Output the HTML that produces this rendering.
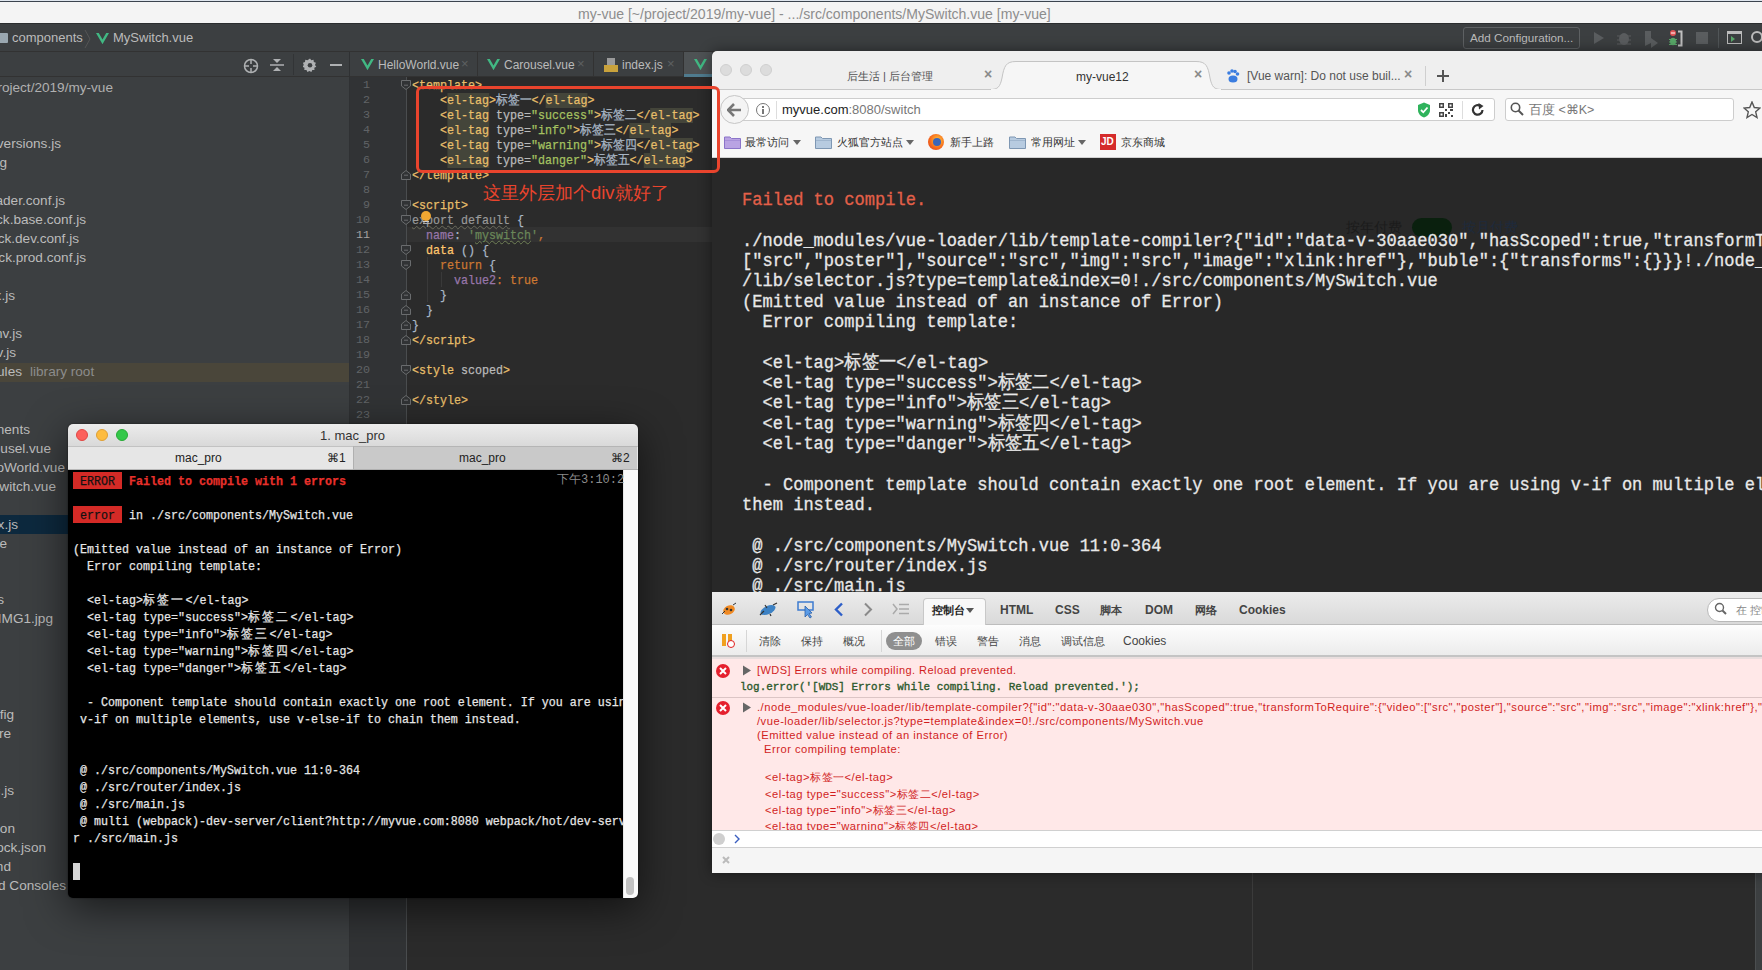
<!DOCTYPE html>
<html><head><meta charset="utf-8">
<style>
*{box-sizing:border-box}
html,body{margin:0;padding:0}
body{width:1762px;height:970px;overflow:hidden;position:relative;background:#2b2b2b;font-family:"Liberation Sans",sans-serif}
.a{position:absolute}
.m{font-family:"Liberation Mono",monospace}
.nw{white-space:pre}
</style></head><body>
<div class="a" style="left:0;top:0;width:1762px;height:24px;background:#f4f4f4"></div>
<div class="a" style="left:0;top:0;width:1762px;height:1px;background:#dfe6ee"></div>
<div class="a" style="left:0;top:1px;width:1762px;height:1px;background:#3b444e"></div>
<div class="a" style="left:0;top:23px;width:1762px;height:1px;background:#2b2d2f"></div>
<div class="a nw" style="left:578px;top:6px;font-size:14.05px;color:#8d8d8d;line-height:16px">my-vue [~/project/2019/my-vue] - .../src/components/MySwitch.vue [my-vue]</div>
<div class="a" style="left:0;top:24px;width:1762px;height:28px;background:#3c3f41"></div>
<div class="a" style="left:0;top:51px;width:1762px;height:1px;background:#323232"></div>
<div class="a" style="left:-2px;top:33px;width:10px;height:10px;background:#9aa7b0;border-radius:1px"></div>
<div class="a nw" style="left:12px;top:30px;font-size:13px;color:#bbbbbb;line-height:16px">components</div>
<svg class="a" style="left:84px;top:29px" width="8" height="20"><path d="M1 1 L6 10 L1 19" stroke="#555" stroke-width="1" fill="none"/></svg>
<svg class="a" style="left:96px;top:33px" width="13" height="11.2" viewBox="0 0 14 12"><path d="M0 0 L3 0 L7 7 L11 0 L14 0 L7 12 Z" fill="#41b883"/></svg>
<div class="a nw" style="left:113px;top:30px;font-size:13px;color:#bbbbbb;line-height:16px">MySwitch.vue</div>
<div class="a" style="left:1463px;top:27px;width:117px;height:22px;border:1px solid #5e6163;border-radius:3px;background:#3c3f41"></div>
<div class="a nw" style="left:1470px;top:31px;font-size:11.7px;color:#bbbbbb;line-height:14px">Add Configuration...</div>
<svg class="a" style="left:1592px;top:30px" width="14" height="16"><path d="M2 2 L12 8 L2 14 Z" fill="#5a5d5f"/></svg>
<svg class="a" style="left:1616px;top:30px" width="16" height="16"><ellipse cx="8" cy="9" rx="5" ry="6" fill="#5a5d5f"/><path d="M1 6h14M1 10h14M1 14h14" stroke="#5a5d5f"/></svg>
<svg class="a" style="left:1642px;top:30px" width="18" height="18"><path d="M3 1h6v12l-6 3z" fill="#5a5d5f"/><path d="M9 8l7 5-7 5z" fill="#5a5d5f"/></svg>
<svg class="a" style="left:1668px;top:29px" width="16" height="19"><circle cx="5" cy="4" r="3" fill="#e05555"/><path d="M3 4h4" stroke="#fff" stroke-width="1"/><ellipse cx="5" cy="12.5" rx="3" ry="3.8" fill="#59a869"/><path d="M1 10.5h8M1 13h8M1 15.5h8" stroke="#59a869" stroke-width="1"/><path d="M10 2.5h3.5v14h-3.5" stroke="#c0c0c0" stroke-width="2" fill="none"/></svg>
<div class="a" style="left:1696px;top:32px;width:12px;height:12px;background:#5a5d5f"></div>
<div class="a" style="left:1718px;top:28px;width:1px;height:20px;background:#515658"></div>
<svg class="a" style="left:1727px;top:31px" width="16" height="14"><rect x="0.5" y="0.5" width="14" height="12" stroke="#bbb" fill="none"/><rect x="0.5" y="0.5" width="14" height="2.5" fill="#bbb"/><path d="M4 5l4 3-4 3z" fill="#59a869"/></svg>
<svg class="a" style="left:1750px;top:30px" width="14" height="16"><circle cx="7" cy="7" r="5" stroke="#bbb" stroke-width="2" fill="none"/></svg>
<div class="a" style="left:0;top:52px;width:350px;height:918px;background:#3c3f41"></div>
<div class="a" style="left:0;top:76px;width:350px;height:1px;background:#323232"></div>
<div class="a" style="left:349px;top:52px;width:1px;height:918px;background:#2f3133"></div>
<svg class="a" style="left:243px;top:58px" width="16" height="16"><circle cx="8" cy="8" r="6.5" stroke="#afb1b3" stroke-width="1.5" fill="none"/><path d="M8 1v5M8 10v5M1 8h5M10 8h5" stroke="#afb1b3" stroke-width="1.5"/></svg>
<svg class="a" style="left:270px;top:58px" width="14" height="14"><path d="M3 1h8l-4 4z M3 13h8l-4-4z" fill="#afb1b3"/><path d="M0 7h14" stroke="#afb1b3" stroke-width="1.5"/></svg>
<div class="a" style="left:293px;top:54px;width:1px;height:21px;background:#323436"></div>
<svg class="a" style="left:303px;top:58px" width="14" height="14" viewBox="0 0 14 14"><path d="M7 0.5l1.3 1.8 2.2-.6.3 2.2 2.1.9-.9 2.1 1.3 1.8-2 1 .2 2.2-2.2 0-.9 2.1-2-1.1-2 1.1-.9-2.1-2.2 0 .2-2.2-2-1 1.3-1.8-.9-2.1 2.1-.9.3-2.2 2.2.6z" fill="#afb1b3"/><circle cx="7" cy="7.2" r="2.3" fill="#3c3f41"/></svg>
<div class="a" style="left:330px;top:64px;width:12px;height:2px;background:#afb1b3"></div>
<div class="a" style="left:0;top:363px;width:349px;height:19px;background:#4a463a"></div>
<div class="a" style="left:0;top:515px;width:349px;height:19px;background:#0d293e"></div>
<div class="a nw" style="right:1649px;top:79px;font-size:13.6px;color:#b0b0b0;line-height:18px">~/project/2019/my-vue</div>
<div class="a nw" style="right:1701px;top:135px;font-size:13.6px;color:#bbbbbb;line-height:18px">check-versions.js</div>
<div class="a nw" style="right:1755px;top:154px;font-size:13.6px;color:#bbbbbb;line-height:18px">config</div>
<div class="a nw" style="right:1697px;top:192px;font-size:13.6px;color:#bbbbbb;line-height:18px">vue-loader.conf.js</div>
<div class="a nw" style="right:1676px;top:211px;font-size:13.6px;color:#bbbbbb;line-height:18px">webpack.base.conf.js</div>
<div class="a nw" style="right:1683px;top:230px;font-size:13.6px;color:#bbbbbb;line-height:18px">webpack.dev.conf.js</div>
<div class="a nw" style="right:1676px;top:249px;font-size:13.6px;color:#bbbbbb;line-height:18px">webpack.prod.conf.js</div>
<div class="a nw" style="right:1747px;top:287px;font-size:13.6px;color:#bbbbbb;line-height:18px">index.js</div>
<div class="a nw" style="right:1740px;top:325px;font-size:13.6px;color:#bbbbbb;line-height:18px">dev.env.js</div>
<div class="a nw" style="right:1746px;top:344px;font-size:13.6px;color:#bbbbbb;line-height:18px">prod.env.js</div>
<div class="a nw" style="right:1732px;top:421px;font-size:13.6px;color:#bbbbbb;line-height:18px">components</div>
<div class="a nw" style="right:1711px;top:440px;font-size:13.6px;color:#bbbbbb;line-height:18px">Carousel.vue</div>
<div class="a nw" style="right:1697px;top:459px;font-size:13.6px;color:#bbbbbb;line-height:18px">HelloWorld.vue</div>
<div class="a nw" style="right:1706px;top:478px;font-size:13.6px;color:#bbbbbb;line-height:18px">MySwitch.vue</div>
<div class="a nw" style="right:1744px;top:516px;font-size:13.6px;color:#bbbbbb;line-height:18px">index.js</div>
<div class="a nw" style="right:1755px;top:535px;font-size:13.6px;color:#bbbbbb;line-height:18px">store</div>
<div class="a nw" style="right:1758px;top:591px;font-size:13.6px;color:#bbbbbb;line-height:18px">as</div>
<div class="a nw" style="right:1709px;top:610px;font-size:13.6px;color:#bbbbbb;line-height:18px">IMG1.jpg</div>
<div class="a nw" style="right:1748px;top:706px;font-size:13.6px;color:#bbbbbb;line-height:18px">.editorconfig</div>
<div class="a nw" style="right:1751px;top:725px;font-size:13.6px;color:#bbbbbb;line-height:18px">.gitignore</div>
<div class="a nw" style="right:1748px;top:782px;font-size:13.6px;color:#bbbbbb;line-height:18px">.postcssrc.js</div>
<div class="a nw" style="right:1747px;top:820px;font-size:13.6px;color:#bbbbbb;line-height:18px">index.json</div>
<div class="a nw" style="right:1716px;top:839px;font-size:13.6px;color:#bbbbbb;line-height:18px">package-lock.json</div>
<div class="a nw" style="right:1751px;top:858px;font-size:13.6px;color:#bbbbbb;line-height:18px">README.md</div>
<div class="a nw" style="right:1696px;top:877px;font-size:13.6px;color:#bbbbbb;line-height:18px">Scratches and Consoles</div>
<div class="a nw" style="right:1740px;top:363px;font-size:13.6px;color:#bbbbbb;line-height:18px">node_modules</div>
<div class="a nw" style="left:30px;top:363px;font-size:13.6px;color:#8c8c8c;line-height:18px">library root</div>
<div class="a" style="left:350px;top:52px;width:1412px;height:25px;background:#3c3f41"></div>
<div class="a" style="left:350px;top:76px;width:1412px;height:1px;background:#323232"></div>
<div class="a" style="left:477px;top:52px;width:1px;height:24px;background:#323232"></div>
<svg class="a" style="left:361px;top:59px" width="13" height="11.2" viewBox="0 0 14 12"><path d="M0 0 L3 0 L7 7 L11 0 L14 0 L7 12 Z" fill="#41b883"/></svg>
<div class="a nw" style="left:378px;top:58px;font-size:12px;color:#bbbbbb;line-height:14px">HelloWorld.vue</div>
<div class="a nw" style="left:461px;top:56px;font-size:13px;color:#5e6163;line-height:15px">&#215;</div>
<div class="a" style="left:593px;top:52px;width:1px;height:24px;background:#323232"></div>
<svg class="a" style="left:487px;top:59px" width="13" height="11.2" viewBox="0 0 14 12"><path d="M0 0 L3 0 L7 7 L11 0 L14 0 L7 12 Z" fill="#41b883"/></svg>
<div class="a nw" style="left:504px;top:58px;font-size:12px;color:#bbbbbb;line-height:14px">Carousel.vue</div>
<div class="a nw" style="left:577px;top:56px;font-size:13px;color:#5e6163;line-height:15px">&#215;</div>
<div class="a" style="left:683px;top:52px;width:1px;height:24px;background:#323232"></div>
<div class="a" style="left:604px;top:58px;width:14px;height:14px"><div class="a" style="left:3px;top:0;width:8px;height:8px;background:#9a9a9a"></div><div class="a" style="left:0;top:7px;width:14px;height:7px;background:#c9a23c"></div></div>
<div class="a nw" style="left:622px;top:58px;font-size:12px;color:#bbbbbb;line-height:14px">index.js</div>
<div class="a nw" style="left:667px;top:56px;font-size:13px;color:#5e6163;line-height:15px">&#215;</div>
<div class="a" style="left:684px;top:52px;width:28px;height:24px;background:#4e5254"></div>
<div class="a" style="left:684px;top:74px;width:28px;height:3px;background:#4f7b8e"></div>
<svg class="a" style="left:694px;top:59px" width="13" height="11.2" viewBox="0 0 14 12"><path d="M0 0 L3 0 L7 7 L11 0 L14 0 L7 12 Z" fill="#41b883"/></svg>
<div class="a" style="left:350px;top:77px;width:57px;height:893px;background:#313335"></div>
<div class="a" style="left:407px;top:227px;width:305px;height:15px;background:#323232"></div>
<div class="a m" style="right:1392px;top:78px;font-size:11.7px;color:#606366;line-height:15px;text-align:right">1</div>
<div class="a m" style="right:1392px;top:93px;font-size:11.7px;color:#606366;line-height:15px;text-align:right">2</div>
<div class="a m" style="right:1392px;top:108px;font-size:11.7px;color:#606366;line-height:15px;text-align:right">3</div>
<div class="a m" style="right:1392px;top:123px;font-size:11.7px;color:#606366;line-height:15px;text-align:right">4</div>
<div class="a m" style="right:1392px;top:138px;font-size:11.7px;color:#606366;line-height:15px;text-align:right">5</div>
<div class="a m" style="right:1392px;top:153px;font-size:11.7px;color:#606366;line-height:15px;text-align:right">6</div>
<div class="a m" style="right:1392px;top:168px;font-size:11.7px;color:#606366;line-height:15px;text-align:right">7</div>
<div class="a m" style="right:1392px;top:183px;font-size:11.7px;color:#606366;line-height:15px;text-align:right">8</div>
<div class="a m" style="right:1392px;top:198px;font-size:11.7px;color:#606366;line-height:15px;text-align:right">9</div>
<div class="a m" style="right:1392px;top:213px;font-size:11.7px;color:#606366;line-height:15px;text-align:right">10</div>
<div class="a m" style="right:1392px;top:228px;font-size:11.7px;color:#a4a3a3;line-height:15px;text-align:right">11</div>
<div class="a m" style="right:1392px;top:243px;font-size:11.7px;color:#606366;line-height:15px;text-align:right">12</div>
<div class="a m" style="right:1392px;top:258px;font-size:11.7px;color:#606366;line-height:15px;text-align:right">13</div>
<div class="a m" style="right:1392px;top:273px;font-size:11.7px;color:#606366;line-height:15px;text-align:right">14</div>
<div class="a m" style="right:1392px;top:288px;font-size:11.7px;color:#606366;line-height:15px;text-align:right">15</div>
<div class="a m" style="right:1392px;top:303px;font-size:11.7px;color:#606366;line-height:15px;text-align:right">16</div>
<div class="a m" style="right:1392px;top:318px;font-size:11.7px;color:#606366;line-height:15px;text-align:right">17</div>
<div class="a m" style="right:1392px;top:333px;font-size:11.7px;color:#606366;line-height:15px;text-align:right">18</div>
<div class="a m" style="right:1392px;top:348px;font-size:11.7px;color:#606366;line-height:15px;text-align:right">19</div>
<div class="a m" style="right:1392px;top:363px;font-size:11.7px;color:#606366;line-height:15px;text-align:right">20</div>
<div class="a m" style="right:1392px;top:378px;font-size:11.7px;color:#606366;line-height:15px;text-align:right">21</div>
<div class="a m" style="right:1392px;top:393px;font-size:11.7px;color:#606366;line-height:15px;text-align:right">22</div>
<div class="a m" style="right:1392px;top:408px;font-size:11.7px;color:#606366;line-height:15px;text-align:right">23</div>
<div class="a" style="left:406px;top:77px;width:1px;height:893px;background:#4a4d4f"></div>
<svg class="a" style="left:401px;top:80px" width="10" height="10"><path d="M0.5 0.5 H9.5 V6 L5 9.5 L0.5 6 Z" fill="#313335" stroke="#6a6c6e"/><path d="M3 5.2 H7" stroke="#6a6c6e"/></svg>
<svg class="a" style="left:401px;top:170px" width="10" height="10"><path d="M0.5 9.5 H9.5 V4 L5 0.5 L0.5 4 Z" fill="#313335" stroke="#6a6c6e"/><path d="M3 5.2 H7" stroke="#6a6c6e"/></svg>
<svg class="a" style="left:401px;top:200px" width="10" height="10"><path d="M0.5 0.5 H9.5 V6 L5 9.5 L0.5 6 Z" fill="#313335" stroke="#6a6c6e"/><path d="M3 5.2 H7" stroke="#6a6c6e"/></svg>
<svg class="a" style="left:401px;top:215px" width="10" height="10"><path d="M0.5 0.5 H9.5 V6 L5 9.5 L0.5 6 Z" fill="#313335" stroke="#6a6c6e"/><path d="M3 5.2 H7" stroke="#6a6c6e"/></svg>
<svg class="a" style="left:401px;top:245px" width="10" height="10"><path d="M0.5 0.5 H9.5 V6 L5 9.5 L0.5 6 Z" fill="#313335" stroke="#6a6c6e"/><path d="M3 5.2 H7" stroke="#6a6c6e"/></svg>
<svg class="a" style="left:401px;top:260px" width="10" height="10"><path d="M0.5 0.5 H9.5 V6 L5 9.5 L0.5 6 Z" fill="#313335" stroke="#6a6c6e"/><path d="M3 5.2 H7" stroke="#6a6c6e"/></svg>
<svg class="a" style="left:401px;top:290px" width="10" height="10"><path d="M0.5 9.5 H9.5 V4 L5 0.5 L0.5 4 Z" fill="#313335" stroke="#6a6c6e"/><path d="M3 5.2 H7" stroke="#6a6c6e"/></svg>
<svg class="a" style="left:401px;top:305px" width="10" height="10"><path d="M0.5 9.5 H9.5 V4 L5 0.5 L0.5 4 Z" fill="#313335" stroke="#6a6c6e"/><path d="M3 5.2 H7" stroke="#6a6c6e"/></svg>
<svg class="a" style="left:401px;top:320px" width="10" height="10"><path d="M0.5 9.5 H9.5 V4 L5 0.5 L0.5 4 Z" fill="#313335" stroke="#6a6c6e"/><path d="M3 5.2 H7" stroke="#6a6c6e"/></svg>
<svg class="a" style="left:401px;top:335px" width="10" height="10"><path d="M0.5 9.5 H9.5 V4 L5 0.5 L0.5 4 Z" fill="#313335" stroke="#6a6c6e"/><path d="M3 5.2 H7" stroke="#6a6c6e"/></svg>
<svg class="a" style="left:401px;top:365px" width="10" height="10"><path d="M0.5 0.5 H9.5 V6 L5 9.5 L0.5 6 Z" fill="#313335" stroke="#6a6c6e"/><path d="M3 5.2 H7" stroke="#6a6c6e"/></svg>
<svg class="a" style="left:401px;top:395px" width="10" height="10"><path d="M0.5 9.5 H9.5 V4 L5 0.5 L0.5 4 Z" fill="#313335" stroke="#6a6c6e"/><path d="M3 5.2 H7" stroke="#6a6c6e"/></svg>
<div class="a m nw" style="left:412px;top:78px;font-size:12.84px;color:#a9b7c6;line-height:15px;-webkit-text-stroke:0.25px;transform:scaleX(0.909);transform-origin:0 50%"><span style="color:#e8bf6a;">&lt;template&gt;</span></div>
<div class="a m nw" style="left:412px;top:93px;font-size:12.84px;color:#a9b7c6;line-height:15px;-webkit-text-stroke:0.25px;transform:scaleX(0.909);transform-origin:0 50%">    <span style="color:#e8bf6a;">&lt;</span><span style="color:#e8bf6a;background:#44453a">el-tag</span><span style="color:#e8bf6a;">&gt;</span><span style="color:#a9b7c6;">标签一</span><span style="color:#e8bf6a;">&lt;/</span><span style="color:#e8bf6a;background:#44453a">el-tag</span><span style="color:#e8bf6a;">&gt;</span></div>
<div class="a m nw" style="left:412px;top:108px;font-size:12.84px;color:#a9b7c6;line-height:15px;-webkit-text-stroke:0.25px;transform:scaleX(0.909);transform-origin:0 50%">    <span style="color:#e8bf6a;">&lt;</span><span style="color:#e8bf6a;background:#44453a">el-tag</span> <span style="color:#bababa;">type=</span><span style="color:#a5c261;">&quot;success&quot;</span><span style="color:#e8bf6a;">&gt;</span><span style="color:#a9b7c6;">标签二</span><span style="color:#e8bf6a;">&lt;/</span><span style="color:#e8bf6a;background:#44453a">el-tag</span><span style="color:#e8bf6a;">&gt;</span></div>
<div class="a m nw" style="left:412px;top:123px;font-size:12.84px;color:#a9b7c6;line-height:15px;-webkit-text-stroke:0.25px;transform:scaleX(0.909);transform-origin:0 50%">    <span style="color:#e8bf6a;">&lt;</span><span style="color:#e8bf6a;background:#44453a">el-tag</span> <span style="color:#bababa;">type=</span><span style="color:#a5c261;">&quot;info&quot;</span><span style="color:#e8bf6a;">&gt;</span><span style="color:#a9b7c6;">标签三</span><span style="color:#e8bf6a;">&lt;/</span><span style="color:#e8bf6a;background:#44453a">el-tag</span><span style="color:#e8bf6a;">&gt;</span></div>
<div class="a m nw" style="left:412px;top:138px;font-size:12.84px;color:#a9b7c6;line-height:15px;-webkit-text-stroke:0.25px;transform:scaleX(0.909);transform-origin:0 50%">    <span style="color:#e8bf6a;">&lt;</span><span style="color:#e8bf6a;background:#44453a">el-tag</span> <span style="color:#bababa;">type=</span><span style="color:#a5c261;">&quot;warning&quot;</span><span style="color:#e8bf6a;">&gt;</span><span style="color:#a9b7c6;">标签四</span><span style="color:#e8bf6a;">&lt;/</span><span style="color:#e8bf6a;background:#44453a">el-tag</span><span style="color:#e8bf6a;">&gt;</span></div>
<div class="a m nw" style="left:412px;top:153px;font-size:12.84px;color:#a9b7c6;line-height:15px;-webkit-text-stroke:0.25px;transform:scaleX(0.909);transform-origin:0 50%">    <span style="color:#e8bf6a;">&lt;</span><span style="color:#e8bf6a;background:#44453a">el-tag</span> <span style="color:#bababa;">type=</span><span style="color:#a5c261;">&quot;danger&quot;</span><span style="color:#e8bf6a;">&gt;</span><span style="color:#a9b7c6;">标签五</span><span style="color:#e8bf6a;">&lt;/</span><span style="color:#e8bf6a;background:#44453a">el-tag</span><span style="color:#e8bf6a;">&gt;</span></div>
<div class="a m nw" style="left:412px;top:168px;font-size:12.84px;color:#a9b7c6;line-height:15px;-webkit-text-stroke:0.25px;transform:scaleX(0.909);transform-origin:0 50%"><span style="color:#e8bf6a;">&lt;/template&gt;</span></div>
<div class="a m nw" style="left:412px;top:198px;font-size:12.84px;color:#a9b7c6;line-height:15px;-webkit-text-stroke:0.25px;transform:scaleX(0.909);transform-origin:0 50%"><span style="color:#e8bf6a;">&lt;script&gt;</span></div>
<div class="a m nw" style="left:412px;top:213px;font-size:12.84px;color:#a9b7c6;line-height:15px;-webkit-text-stroke:0.25px;transform:scaleX(0.909);transform-origin:0 50%"><span style="color:#9a9a9a;text-decoration:underline wavy #6a6a5a;text-decoration-thickness:1px;-webkit-text-stroke:0.2px">export default</span> <span style="color:#a9b7c6;">{</span></div>
<div class="a m nw" style="left:412px;top:228px;font-size:12.84px;color:#a9b7c6;line-height:15px;-webkit-text-stroke:0.25px;transform:scaleX(0.909);transform-origin:0 50%">  <span style="color:#9876aa;">name</span><span style="color:#a9b7c6;">: </span><span style="color:#6a8759;">&#x27;</span><span style="color:#6a8759;text-decoration:underline wavy #6f7f55;text-decoration-thickness:1px">myswitch</span><span style="color:#6a8759;">&#x27;</span><span style="color:#cc7832;">,</span></div>
<div class="a m nw" style="left:412px;top:243px;font-size:12.84px;color:#a9b7c6;line-height:15px;-webkit-text-stroke:0.25px;transform:scaleX(0.909);transform-origin:0 50%">  <span style="color:#ffc66d;">data</span> <span style="color:#a9b7c6;">() {</span></div>
<div class="a m nw" style="left:412px;top:258px;font-size:12.84px;color:#a9b7c6;line-height:15px;-webkit-text-stroke:0.25px;transform:scaleX(0.909);transform-origin:0 50%">    <span style="color:#cc7832;">return</span> <span style="color:#a9b7c6;">{</span></div>
<div class="a m nw" style="left:412px;top:273px;font-size:12.84px;color:#a9b7c6;line-height:15px;-webkit-text-stroke:0.25px;transform:scaleX(0.909);transform-origin:0 50%">      <span style="color:#9876aa;">value2</span><span style="color:#cc7832;">: </span><span style="color:#cc7832;">true</span></div>
<div class="a m nw" style="left:412px;top:288px;font-size:12.84px;color:#a9b7c6;line-height:15px;-webkit-text-stroke:0.25px;transform:scaleX(0.909);transform-origin:0 50%">    <span style="color:#a9b7c6;">}</span></div>
<div class="a m nw" style="left:412px;top:303px;font-size:12.84px;color:#a9b7c6;line-height:15px;-webkit-text-stroke:0.25px;transform:scaleX(0.909);transform-origin:0 50%">  <span style="color:#a9b7c6;">}</span></div>
<div class="a m nw" style="left:412px;top:318px;font-size:12.84px;color:#a9b7c6;line-height:15px;-webkit-text-stroke:0.25px;transform:scaleX(0.909);transform-origin:0 50%"><span style="color:#a9b7c6;">}</span></div>
<div class="a m nw" style="left:412px;top:333px;font-size:12.84px;color:#a9b7c6;line-height:15px;-webkit-text-stroke:0.25px;transform:scaleX(0.909);transform-origin:0 50%"><span style="color:#e8bf6a;">&lt;/script&gt;</span></div>
<div class="a m nw" style="left:412px;top:363px;font-size:12.84px;color:#a9b7c6;line-height:15px;-webkit-text-stroke:0.25px;transform:scaleX(0.909);transform-origin:0 50%"><span style="color:#e8bf6a;">&lt;style</span> <span style="color:#bababa;">scoped</span><span style="color:#e8bf6a;">&gt;</span></div>
<div class="a m nw" style="left:412px;top:393px;font-size:12.84px;color:#a9b7c6;line-height:15px;-webkit-text-stroke:0.25px;transform:scaleX(0.909);transform-origin:0 50%"><span style="color:#e8bf6a;">&lt;/style&gt;</span></div>
<div class="a" style="left:421px;top:211px;width:10px;height:10px;border-radius:50%;background:#f0a732"></div><div class="a" style="left:423px;top:221px;width:6px;height:1px;background:#cccccc"></div><div class="a" style="left:423px;top:223px;width:6px;height:1px;background:#aaaaaa"></div>
<div class="a" style="left:427px;top:257px;width:1px;height:45px;background:#393939"></div>
<div class="a" style="left:441px;top:272px;width:1px;height:15px;background:#393939"></div>
<div class="a" style="left:1252px;top:77px;width:1px;height:893px;background:#3b3b3b"></div>
<div class="a" style="left:1755px;top:77px;width:7px;height:893px;background:#3c3f41;border-left:1px solid #4b4e50"></div><div class="a" style="left:712px;top:51px;width:1060px;height:822px;background:#282828;border-radius:5px 0 0 0;box-shadow:0 0 14px rgba(0,0,0,0.45);overflow:hidden">
<div class="a" style="left:0;top:0;width:1060px;height:39px;background:#efefef;border-bottom:1px solid #c8c8c8"></div>
<div class="a" style="left:8px;top:13px;width:12px;height:12px;border-radius:50%;background:#dcdcdc;border:1px solid #cfcfcf"></div>
<div class="a" style="left:28px;top:13px;width:12px;height:12px;border-radius:50%;background:#dcdcdc;border:1px solid #cfcfcf"></div>
<div class="a" style="left:48px;top:13px;width:12px;height:12px;border-radius:50%;background:#dcdcdc;border:1px solid #cfcfcf"></div>
<div class="a nw" style="left:135px;top:18px;font-size:11.2px;color:#555;line-height:15px">后生活 | 后台管理</div>
<div class="a nw" style="left:272px;top:16px;font-size:14px;color:#8a8a8a;line-height:15px;font-weight:bold">&#215;</div>
<svg class="a" style="left:278px;top:9px" width="240" height="32"><path d="M0 29.5 C8 29.5 10 27 12 18 C14 6 16 1.5 26 1.5 L206 1.5 C216 1.5 218 6 220 18 C222 27 224 29.5 232 29.5" fill="#f6f6f6" stroke="#c4c4c4" stroke-width="1"/><rect x="1" y="29" width="230" height="3" fill="#f6f6f6"/></svg>
<div class="a nw" style="left:364px;top:19px;font-size:12px;color:#333;line-height:15px">my-vue12</div>
<div class="a nw" style="left:482px;top:16px;font-size:14px;color:#8a8a8a;line-height:15px;font-weight:bold">&#215;</div>
<svg class="a" style="left:514px;top:18px" width="14" height="14"><circle cx="3" cy="4" r="1.8" fill="#3b7de0"/><circle cx="6" cy="2" r="1.8" fill="#3b7de0"/><circle cx="9" cy="2.5" r="1.8" fill="#3b7de0"/><circle cx="11.5" cy="5" r="1.8" fill="#3b7de0"/><ellipse cx="7" cy="10" rx="4.5" ry="3.5" fill="#3b7de0"/></svg>
<div class="a nw" style="left:535px;top:18px;font-size:12px;color:#555;line-height:15px">[Vue warn]: Do not use buil...</div>
<div class="a nw" style="left:692px;top:16px;font-size:14px;color:#8a8a8a;line-height:15px;font-weight:bold">&#215;</div>
<div class="a" style="left:713px;top:15px;width:1px;height:20px;background:#cfcfcf"></div>
<div class="a" style="left:725px;top:24px;width:12px;height:2px;background:#555"></div>
<div class="a" style="left:730px;top:19px;width:2px;height:12px;background:#555"></div>
<div class="a" style="left:0;top:39px;width:1060px;height:38px;background:#f6f6f6"></div>
<div class="a" style="left:28px;top:47px;width:755px;height:23px;background:#fff;border:1px solid #cdcdcd;border-radius:0 3px 3px 0"></div>
<div class="a" style="left:8px;top:44px;width:29px;height:29px;border-radius:50%;background:#f4f4f4;border:1px solid #c6c6c6"></div>
<svg class="a" style="left:15px;top:52px" width="15" height="14"><path d="M7 1 L1 7 L7 13 M1.5 7 H14" stroke="#777" stroke-width="2.6" fill="none"/></svg>
<div class="a" style="left:44px;top:52px;width:14px;height:14px;border-radius:50%;border:1.3px solid #777"></div>
<div class="a" style="left:50px;top:55px;width:2px;height:2px;background:#777"></div>
<div class="a" style="left:50px;top:58px;width:2px;height:5px;background:#777"></div>
<div class="a" style="left:64px;top:50px;width:1px;height:18px;background:#ddd"></div>
<div class="a nw" style="left:70px;top:51px;font-size:13px;color:#222;line-height:16px">myvue.com<span style="color:#777">:8080/switch</span></div>
<svg class="a" style="left:705px;top:51px" width="14" height="16"><path d="M7 0.5 L13 3 V8 C13 12 10 14.5 7 15.5 C4 14.5 1 12 1 8 V3 Z" fill="#2fb35c"/><path d="M4 8 L6.3 10.3 L10.5 5.5" stroke="#fff" stroke-width="1.8" fill="none"/></svg>
<svg class="a" style="left:727px;top:52px" width="14" height="14"><g fill="#444"><rect x="0" y="0" width="5" height="5"/><rect x="9" y="0" width="5" height="5"/><rect x="0" y="9" width="5" height="5"/><rect x="6" y="6" width="2" height="2"/><rect x="9" y="9" width="2" height="2"/><rect x="12" y="12" width="2" height="2"/><rect x="6" y="11" width="2" height="3"/><rect x="11" y="6" width="3" height="2"/></g><g fill="#fff"><rect x="1.5" y="1.5" width="2" height="2"/><rect x="10.5" y="1.5" width="2" height="2"/><rect x="1.5" y="10.5" width="2" height="2"/></g></svg>
<div class="a" style="left:750px;top:50px;width:1px;height:18px;background:#ddd"></div>
<svg class="a" style="left:759px;top:52px" width="14" height="14"><path d="M11.5 7 A4.8 4.8 0 1 1 9.5 3" stroke="#333" stroke-width="2.2" fill="none"/><path d="M7.5 0 L12.5 3 L8 6.5 Z" fill="#333"/></svg>
<div class="a" style="left:793px;top:47px;width:229px;height:23px;background:#fff;border:1px solid #cdcdcd;border-radius:3px"></div>
<svg class="a" style="left:798px;top:51px" width="14" height="14"><circle cx="5.5" cy="5.5" r="4.2" stroke="#555" stroke-width="1.6" fill="none"/><path d="M8.5 8.5 L13 13" stroke="#555" stroke-width="2"/></svg>
<div class="a nw" style="left:817px;top:52px;font-size:12.5px;color:#777;line-height:15px">百度 &lt;&#8984;K&gt;</div>
<svg class="a" style="left:1031px;top:50px" width="18" height="18"><path d="M9 1 L11.3 6.5 L17 7 L12.7 10.8 L14 16.5 L9 13.5 L4 16.5 L5.3 10.8 L1 7 L6.7 6.5 Z" stroke="#555" stroke-width="1.4" fill="none"/></svg>
<div class="a" style="left:0;top:77px;width:1060px;height:30px;background:#f6f6f6;border-bottom:1px solid #d0d0d0"></div>
<svg class="a" style="left:12px;top:84px" width="17" height="14"><path d="M0.5 2 H6 L7.5 3.5 H16.5 V13.5 H0.5 Z" fill="#b9a3e3" stroke="#8b74c9"/><rect x="0.5" y="5" width="16" height="1" fill="#8b74c9" opacity="0.4"/></svg>
<div class="a nw" style="left:33px;top:84px;font-size:11px;color:#333;line-height:15px">最常访问</div>
<svg class="a" style="left:81px;top:89px" width="8" height="5"><path d="M0 0H8L4 5Z" fill="#666"/></svg>
<svg class="a" style="left:103px;top:84px" width="17" height="14"><path d="M0.5 2 H6 L7.5 3.5 H16.5 V13.5 H0.5 Z" fill="#b7cbe0" stroke="#7e97b3"/><rect x="0.5" y="5" width="16" height="1" fill="#7e97b3" opacity="0.4"/></svg>
<div class="a nw" style="left:125px;top:84px;font-size:11px;color:#333;line-height:15px">火狐官方站点</div>
<svg class="a" style="left:194px;top:89px" width="8" height="5"><path d="M0 0H8L4 5Z" fill="#666"/></svg>
<div class="a" style="left:216px;top:83px;width:16px;height:16px;border-radius:50%;background:radial-gradient(circle at 60% 40%,#ffcb3d 0,#f76b1c 55%,#d8361b 100%)"></div>
<div class="a" style="left:221px;top:87px;width:8px;height:8px;border-radius:50%;background:#3b66b8"></div>
<div class="a nw" style="left:238px;top:84px;font-size:11px;color:#333;line-height:15px">新手上路</div>
<svg class="a" style="left:297px;top:84px" width="17" height="14"><path d="M0.5 2 H6 L7.5 3.5 H16.5 V13.5 H0.5 Z" fill="#b7cbe0" stroke="#7e97b3"/><rect x="0.5" y="5" width="16" height="1" fill="#7e97b3" opacity="0.4"/></svg>
<div class="a nw" style="left:319px;top:84px;font-size:11px;color:#333;line-height:15px">常用网址</div>
<svg class="a" style="left:366px;top:89px" width="8" height="5"><path d="M0 0H8L4 5Z" fill="#666"/></svg>
<div class="a" style="left:388px;top:83px;width:16px;height:16px;background:#d52b2b"></div>
<div class="a nw" style="left:389px;top:85px;font-size:10px;color:#fff;line-height:12px;font-weight:bold">JD</div>
<div class="a nw" style="left:409px;top:84px;font-size:11px;color:#333;line-height:15px">京东商城</div>
<div class="a" style="left:0;top:107px;width:1060px;height:434px;background:#282828"></div>
<div class="a nw" style="left:634px;top:168px;font-size:14px;color:#1b1b1b;line-height:16px">按年付费</div>
<div class="a" style="left:700px;top:167px;width:40px;height:19px;border-radius:10px;background:#0a200e"></div>
<div class="a nw" style="left:750px;top:168px;font-size:14px;color:#1e2a3c;line-height:16px">按月付费</div>
<div class="a m nw" style="left:30px;top:138.50px;font-size:18.75px;color:#e36049;line-height:20px;-webkit-text-stroke:0.3px;transform:scaleX(0.9093);transform-origin:0 50%">Failed to compile.</div>
<div class="a m nw" style="left:30px;top:179.50px;font-size:18.75px;color:#e8e8e8;line-height:20px;-webkit-text-stroke:0.3px;transform:scaleX(0.9093);transform-origin:0 50%">./node_modules/vue-loader/lib/template-compiler?{&quot;id&quot;:&quot;data-v-30aae030&quot;,&quot;hasScoped&quot;:true,&quot;transformToRequire&quot;:{&quot;video&quot;:</div>
<div class="a m nw" style="left:30px;top:199.85px;font-size:18.75px;color:#e8e8e8;line-height:20px;-webkit-text-stroke:0.3px;transform:scaleX(0.9093);transform-origin:0 50%">[&quot;src&quot;,&quot;poster&quot;],&quot;source&quot;:&quot;src&quot;,&quot;img&quot;:&quot;src&quot;,&quot;image&quot;:&quot;xlink:href&quot;},&quot;buble&quot;:{&quot;transforms&quot;:{}}}!./node_modules/vue-loader</div>
<div class="a m nw" style="left:30px;top:220.20px;font-size:18.75px;color:#e8e8e8;line-height:20px;-webkit-text-stroke:0.3px;transform:scaleX(0.9093);transform-origin:0 50%">/lib/selector.js?type=template&amp;index=0!./src/components/MySwitch.vue</div>
<div class="a m nw" style="left:30px;top:240.55px;font-size:18.75px;color:#e8e8e8;line-height:20px;-webkit-text-stroke:0.3px;transform:scaleX(0.9093);transform-origin:0 50%">(Emitted value instead of an instance of Error)</div>
<div class="a m nw" style="left:30px;top:260.90px;font-size:18.75px;color:#e8e8e8;line-height:20px;-webkit-text-stroke:0.3px;transform:scaleX(0.9093);transform-origin:0 50%">  Error compiling template:</div>
<div class="a m nw" style="left:30px;top:301.60px;font-size:18.75px;color:#e8e8e8;line-height:20px;-webkit-text-stroke:0.3px;transform:scaleX(0.9093);transform-origin:0 50%">  &lt;el-tag&gt;标签一&lt;/el-tag&gt;</div>
<div class="a m nw" style="left:30px;top:321.95px;font-size:18.75px;color:#e8e8e8;line-height:20px;-webkit-text-stroke:0.3px;transform:scaleX(0.9093);transform-origin:0 50%">  &lt;el-tag type=&quot;success&quot;&gt;标签二&lt;/el-tag&gt;</div>
<div class="a m nw" style="left:30px;top:342.30px;font-size:18.75px;color:#e8e8e8;line-height:20px;-webkit-text-stroke:0.3px;transform:scaleX(0.9093);transform-origin:0 50%">  &lt;el-tag type=&quot;info&quot;&gt;标签三&lt;/el-tag&gt;</div>
<div class="a m nw" style="left:30px;top:362.65px;font-size:18.75px;color:#e8e8e8;line-height:20px;-webkit-text-stroke:0.3px;transform:scaleX(0.9093);transform-origin:0 50%">  &lt;el-tag type=&quot;warning&quot;&gt;标签四&lt;/el-tag&gt;</div>
<div class="a m nw" style="left:30px;top:383.00px;font-size:18.75px;color:#e8e8e8;line-height:20px;-webkit-text-stroke:0.3px;transform:scaleX(0.9093);transform-origin:0 50%">  &lt;el-tag type=&quot;danger&quot;&gt;标签五&lt;/el-tag&gt;</div>
<div class="a m nw" style="left:30px;top:423.70px;font-size:18.75px;color:#e8e8e8;line-height:20px;-webkit-text-stroke:0.3px;transform:scaleX(0.9093);transform-origin:0 50%">  - Component template should contain exactly one root element. If you are using v-if on multiple elements, use v-else-if to chain</div>
<div class="a m nw" style="left:30px;top:444.05px;font-size:18.75px;color:#e8e8e8;line-height:20px;-webkit-text-stroke:0.3px;transform:scaleX(0.9093);transform-origin:0 50%">them instead.</div>
<div class="a m nw" style="left:30px;top:484.75px;font-size:18.75px;color:#e8e8e8;line-height:20px;-webkit-text-stroke:0.3px;transform:scaleX(0.9093);transform-origin:0 50%"> @ ./src/components/MySwitch.vue 11:0-364</div>
<div class="a m nw" style="left:30px;top:505.10px;font-size:18.75px;color:#e8e8e8;line-height:20px;-webkit-text-stroke:0.3px;transform:scaleX(0.9093);transform-origin:0 50%"> @ ./src/router/index.js</div>
<div class="a m nw" style="left:30px;top:525.45px;font-size:18.75px;color:#e8e8e8;line-height:20px;-webkit-text-stroke:0.3px;transform:scaleX(0.9093);transform-origin:0 50%"> @ ./src/main.js</div>
<div class="a m nw" style="left:30px;top:545.80px;font-size:18.75px;color:#e8e8e8;line-height:20px;-webkit-text-stroke:0.3px;transform:scaleX(0.9093);transform-origin:0 50%"> @ multi (webpack)-dev-server/client?http://myvue.com:8080 webpack/hot/dev-server ./src/main.js</div>
<div class="a" style="left:0;top:541px;width:1060px;height:281px;background:#f5f5f5"></div>
<div class="a" style="left:0;top:541px;width:1060px;height:33px;background:linear-gradient(#ececec,#d9d9d9);border-bottom:1px solid #bdbdbd"></div>
<svg class="a" style="left:9px;top:551px" width="16" height="14"><ellipse cx="8" cy="8" rx="6" ry="4.5" fill="#f08a24" transform="rotate(-25 8 8)"/><circle cx="6" cy="7" r="1.3" fill="#333"/><circle cx="10" cy="8" r="1.3" fill="#333"/><path d="M1 12 L4 9 M12 3 L15 1" stroke="#333"/></svg>
<svg class="a" style="left:45px;top:550px" width="22" height="16"><ellipse cx="11" cy="9" rx="8" ry="4" fill="#3d82c4" transform="rotate(-25 11 9)"/><path d="M3 14 L7 10 M16 4 L20 2 M8 4 L10 7 M13 13 L14 15" stroke="#333" stroke-width="1.2"/></svg>
<svg class="a" style="left:85px;top:550px" width="18" height="18"><rect x="1" y="1" width="15" height="8" fill="none" stroke="#3d7bd0" stroke-width="1.5"/><path d="M8 5 L8 16 L10.5 13.5 L13 17 L14.5 16 L12 12.5 L15 12 Z" fill="#5b9be6" stroke="#2c5fa8" stroke-width="0.8"/></svg>
<svg class="a" style="left:122px;top:551px" width="10" height="15"><path d="M8 1.5 L2 7.5 L8 13.5" stroke="#2d5ec8" stroke-width="2.4" fill="none"/></svg>
<svg class="a" style="left:151px;top:551px" width="10" height="15"><path d="M2 1.5 L8 7.5 L2 13.5" stroke="#8a8a8a" stroke-width="2" fill="none"/></svg>
<svg class="a" style="left:180px;top:552px" width="18" height="12"><path d="M1 1 L5 6 L1 11" stroke="#aaa" stroke-width="1.5" fill="none"/><path d="M7 1.5 H17 M7 6 H17 M7 10.5 H17" stroke="#aaa" stroke-width="1.5"/></svg>
<div class="a" style="left:211px;top:547px;width:63px;height:28px;background:#f9f9f9;border:1px solid #c8c8c8;border-bottom:none;border-radius:4px 4px 0 0"></div>
<div class="a nw" style="left:220px;top:552px;font-size:11px;color:#222;line-height:14px;font-weight:bold">控制台</div>
<svg class="a" style="left:254px;top:557px" width="8" height="5"><path d="M0 0H8L4 5Z" fill="#555"/></svg>
<div class="a nw" style="left:288px;top:552px;font-size:12px;color:#444;line-height:14px;font-weight:bold">HTML</div>
<div class="a nw" style="left:343px;top:552px;font-size:12px;color:#444;line-height:14px;font-weight:bold">CSS</div>
<div class="a nw" style="left:388px;top:552px;font-size:11px;color:#444;line-height:14px;font-weight:bold">脚本</div>
<div class="a nw" style="left:433px;top:552px;font-size:12px;color:#444;line-height:14px;font-weight:bold">DOM</div>
<div class="a nw" style="left:483px;top:552px;font-size:11px;color:#444;line-height:14px;font-weight:bold">网络</div>
<div class="a nw" style="left:527px;top:552px;font-size:12px;color:#444;line-height:14px;font-weight:bold">Cookies</div>
<div class="a" style="left:995px;top:547px;width:80px;height:24px;border-radius:12px;background:#fff;border:1px solid #b8b8b8"></div>
<svg class="a" style="left:1002px;top:551px" width="14" height="14"><circle cx="5.5" cy="5.5" r="4" stroke="#666" stroke-width="1.4" fill="none"/><path d="M8.5 8.5 L12 12" stroke="#666" stroke-width="2"/></svg>
<div class="a nw" style="left:1024px;top:552px;font-size:11px;color:#888;line-height:14px">在 控制台</div>
<div class="a" style="left:0;top:574px;width:1060px;height:32px;background:linear-gradient(#fdfdfd,#ececec);border-bottom:2px solid #c4c4c4"></div>
<div class="a" style="left:0;top:606px;width:1060px;height:2px;background:#e9dede"></div>
<div class="a" style="left:10px;top:583px;width:4px;height:12px;background:#f0a020"></div>
<div class="a" style="left:16px;top:583px;width:4px;height:8px;background:#f0a020"></div>
<div class="a" style="left:15px;top:589px;width:8px;height:8px;border-radius:50%;border:1.5px solid #e02020;background:#fff"></div>
<div class="a" style="left:34px;top:579px;width:1px;height:22px;background:#d6d6d6"></div>
<div class="a" style="left:169px;top:579px;width:1px;height:22px;background:#d6d6d6"></div>
<div class="a nw" style="left:47px;top:583px;font-size:11px;color:#444;line-height:14px">清除</div>
<div class="a nw" style="left:89px;top:583px;font-size:11px;color:#444;line-height:14px">保持</div>
<div class="a nw" style="left:131px;top:583px;font-size:11px;color:#444;line-height:14px">概况</div>
<div class="a nw" style="left:223px;top:583px;font-size:11px;color:#444;line-height:14px">错误</div>
<div class="a nw" style="left:265px;top:583px;font-size:11px;color:#444;line-height:14px">警告</div>
<div class="a nw" style="left:307px;top:583px;font-size:11px;color:#444;line-height:14px">消息</div>
<div class="a nw" style="left:349px;top:583px;font-size:11px;color:#444;line-height:14px">调试信息</div>
<div class="a nw" style="left:411px;top:583px;font-size:12px;color:#444;line-height:14px">Cookies</div>
<div class="a" style="left:174px;top:581px;width:36px;height:18px;border-radius:9px;background:#8f8f8f"></div>
<div class="a nw" style="left:181px;top:583px;font-size:11px;color:#fff;line-height:14px">全部</div>
<div class="a" style="left:0;top:608px;width:1060px;height:171px;background:#ffe8e8"></div>
<div class="a" style="left:0;top:646px;width:1060px;height:1px;background:#dcc5c5"></div>
<svg class="a" style="left:3px;top:612px" width="16" height="16"><circle cx="8" cy="8" r="7" fill="#e5202e"/><path d="M5 5 L11 11 M11 5 L5 11" stroke="#fff" stroke-width="2"/></svg>
<svg class="a" style="left:30px;top:614px" width="10" height="11"><path d="M1 0.5 L9 5.5 L1 10.5 Z" fill="#666"/></svg>
<div class="a nw" style="left:45px;top:612px;font-size:11px;letter-spacing:0.45px;color:#d11d1d;line-height:14px">[WDS] Errors while compiling. Reload prevented.</div>
<div class="a nw" style="left:28px;top:629px;font-family:'Liberation Mono',monospace;font-size:10.93px;color:#2d5a2d;line-height:14px;-webkit-text-stroke:0.35px">log.error('[WDS] Errors while compiling. Reload prevented.');</div>
<svg class="a" style="left:3px;top:649px" width="16" height="16"><circle cx="8" cy="8" r="7" fill="#e5202e"/><path d="M5 5 L11 11 M11 5 L5 11" stroke="#fff" stroke-width="2"/></svg>
<svg class="a" style="left:30px;top:651px" width="10" height="11"><path d="M1 0.5 L9 5.5 L1 10.5 Z" fill="#666"/></svg>
<div class="a" style="left:0;top:608px;width:1060px;height:171px;overflow:hidden">
<div class="a nw" style="left:45px;top:41px;font-size:11.2px;letter-spacing:0.5px;color:#d11d1d;line-height:14px">./node_modules/vue-loader/lib/template-compiler?{"id":"data-v-30aae030","hasScoped":true,"transformToRequire":{"video":["src","poster"],"source":"src","img":"src","image":"xlink:href"},"buble":{"transforms":{}}}!./node_modules</div>
<div class="a nw" style="left:45px;top:55px;font-size:11.2px;letter-spacing:0.5px;color:#d11d1d;line-height:14px">/vue-loader/lib/selector.js?type=template&amp;index=0!./src/components/MySwitch.vue</div>
<div class="a nw" style="left:45px;top:69px;font-size:11.2px;letter-spacing:0.5px;color:#d11d1d;line-height:14px">(Emitted value instead of an instance of Error)</div>
<div class="a nw" style="left:52px;top:83px;font-size:11.2px;letter-spacing:0.5px;color:#d11d1d;line-height:14px">Error compiling template:</div>
<div class="a nw" style="left:53px;top:111px;font-size:11.2px;letter-spacing:0.5px;color:#d11d1d;line-height:14px">&lt;el-tag&gt;标签一&lt;/el-tag&gt;</div>
<div class="a nw" style="left:53px;top:128px;font-size:11.2px;letter-spacing:0.5px;color:#d11d1d;line-height:14px">&lt;el-tag type="success"&gt;标签二&lt;/el-tag&gt;</div>
<div class="a nw" style="left:53px;top:144px;font-size:11.2px;letter-spacing:0.5px;color:#d11d1d;line-height:14px">&lt;el-tag type="info"&gt;标签三&lt;/el-tag&gt;</div>
<div class="a nw" style="left:53px;top:160px;font-size:11.2px;letter-spacing:0.5px;color:#d11d1d;line-height:14px">&lt;el-tag type="warning"&gt;标签四&lt;/el-tag&gt;</div>
</div>
<div class="a" style="left:0;top:779px;width:1060px;height:18px;background:#fff;border-top:1px solid #d0d0d0;border-bottom:1px solid #d0d0d0"></div>
<div class="a" style="left:1px;top:782px;width:12px;height:12px;border-radius:50%;background:#cfcfcf"></div>
<svg class="a" style="left:22px;top:783px" width="6" height="10"><path d="M1 1 L5 5 L1 9" stroke="#3b5fc0" stroke-width="1.4" fill="none"/></svg>
<svg class="a" style="left:10px;top:805px" width="8" height="8"><path d="M1 1 L7 7 M7 1 L1 7" stroke="#bbb" stroke-width="2"/></svg>
</div><div class="a" style="left:68px;top:424px;width:570px;height:474px;border-radius:5px;box-shadow:0 10px 40px rgba(0,0,0,0.6),0 0 2px rgba(0,0,0,0.5);background:#000;overflow:hidden">
<div class="a" style="left:0;top:0;width:570px;height:22px;background:linear-gradient(#ececec,#d9d9d9)"></div>
<div class="a" style="left:8px;top:5px;width:12px;height:12px;border-radius:50%;background:#fc605c;border:0.5px solid #df4744"></div>
<div class="a" style="left:28px;top:5px;width:12px;height:12px;border-radius:50%;background:#fdbc40;border:0.5px solid #de9f34"></div>
<div class="a" style="left:48px;top:5px;width:12px;height:12px;border-radius:50%;background:#34c84a;border:0.5px solid #27aa35"></div>
<div class="a nw" style="left:252px;top:4px;font-size:13px;color:#333;line-height:15px">1. mac_pro</div>
<div class="a" style="left:0;top:22px;width:570px;height:24px;background:#e6e6e6;border-top:1px solid #c2c2c2;border-bottom:1px solid #b8b8b8"></div>
<div class="a" style="left:285px;top:22px;width:284px;height:24px;background:#c9c9c9;border-top:1px solid #b5b5b5;border-left:1px solid #b0b0b0;border-bottom:1px solid #b0b0b0"></div>
<div class="a nw" style="left:107px;top:27px;font-size:12px;color:#222;line-height:14px">mac_pro</div>
<div class="a nw" style="left:259px;top:27px;font-size:12px;color:#222;line-height:14px">&#8984;1</div>
<div class="a nw" style="left:391px;top:27px;font-size:12px;color:#222;line-height:14px">mac_pro</div>
<div class="a nw" style="left:543px;top:27px;font-size:12px;color:#222;line-height:14px">&#8984;2</div>
<div class="a" style="left:555px;top:46px;width:15px;height:428px;background:#fafafa;border-left:1px solid #e8e8e8"></div>
<div class="a" style="left:558px;top:453px;width:8px;height:18px;border-radius:4px;background:#c2c2c2"></div>
<div class="a" style="left:5px;top:48px;width:49px;height:17px;background:#d42a26"></div>
<div class="a" style="left:5px;top:82px;width:49px;height:17px;background:#d42a26"></div>
<div class="a m nw" style="left:5px;top:48.5px;font-size:12.84px;line-height:17px;color:#e6e6e6;-webkit-text-stroke:0.25px;transform:scaleX(0.909);transform-origin:0 50%"><span style="color:#111"> ERROR </span><b style="color:#e8302b"> Failed to compile with 1 errors</b></div>
<div class="a nw" style="left:489px;top:49px;font-size:12px;color:#8c8c8c;line-height:14px;font-family:'Liberation Mono',monospace">下午3:10:2</div>
<div class="a m nw" style="left:5px;top:82.5px;font-size:12.84px;line-height:17px;color:#e6e6e6;-webkit-text-stroke:0.25px;transform:scaleX(0.909);transform-origin:0 50%"><span style="color:#111"> error </span> in ./src/components/MySwitch.vue</div>
<div class="a" style="left:0;top:46px;width:555px;height:428px;overflow:hidden">
<div class="a m nw" style="left:5px;top:70.5px;font-size:12.84px;line-height:17px;color:#e6e6e6;-webkit-text-stroke:0.25px;transform:scaleX(0.909);transform-origin:0 50%">(Emitted value instead of an instance of Error)</div>
<div class="a m nw" style="left:5px;top:87.5px;font-size:12.84px;line-height:17px;color:#e6e6e6;-webkit-text-stroke:0.25px;transform:scaleX(0.909);transform-origin:0 50%">  Error compiling template:</div>
<div class="a m nw" style="left:5px;top:121.5px;font-size:12.84px;line-height:17px;color:#e6e6e6;-webkit-text-stroke:0.25px;transform:scaleX(0.909);transform-origin:0 50%">  &lt;el-tag&gt;<span style="letter-spacing:2.6px">标签一</span>&lt;/el-tag&gt;</div>
<div class="a m nw" style="left:5px;top:138.5px;font-size:12.84px;line-height:17px;color:#e6e6e6;-webkit-text-stroke:0.25px;transform:scaleX(0.909);transform-origin:0 50%">  &lt;el-tag type="success"&gt;<span style="letter-spacing:2.6px">标签二</span>&lt;/el-tag&gt;</div>
<div class="a m nw" style="left:5px;top:155.5px;font-size:12.84px;line-height:17px;color:#e6e6e6;-webkit-text-stroke:0.25px;transform:scaleX(0.909);transform-origin:0 50%">  &lt;el-tag type="info"&gt;<span style="letter-spacing:2.6px">标签三</span>&lt;/el-tag&gt;</div>
<div class="a m nw" style="left:5px;top:172.5px;font-size:12.84px;line-height:17px;color:#e6e6e6;-webkit-text-stroke:0.25px;transform:scaleX(0.909);transform-origin:0 50%">  &lt;el-tag type="warning"&gt;<span style="letter-spacing:2.6px">标签四</span>&lt;/el-tag&gt;</div>
<div class="a m nw" style="left:5px;top:189.5px;font-size:12.84px;line-height:17px;color:#e6e6e6;-webkit-text-stroke:0.25px;transform:scaleX(0.909);transform-origin:0 50%">  &lt;el-tag type="danger"&gt;<span style="letter-spacing:2.6px">标签五</span>&lt;/el-tag&gt;</div>
<div class="a m nw" style="left:5px;top:223.5px;font-size:12.84px;line-height:17px;color:#e6e6e6;-webkit-text-stroke:0.25px;transform:scaleX(0.909);transform-origin:0 50%">  - Component template should contain exactly one root element. If you are using</div>
<div class="a m nw" style="left:5px;top:240.5px;font-size:12.84px;line-height:17px;color:#e6e6e6;-webkit-text-stroke:0.25px;transform:scaleX(0.909);transform-origin:0 50%"> v-if on multiple elements, use v-else-if to chain them instead.</div>
<div class="a m nw" style="left:5px;top:291.5px;font-size:12.84px;line-height:17px;color:#e6e6e6;-webkit-text-stroke:0.25px;transform:scaleX(0.909);transform-origin:0 50%"> @ ./src/components/MySwitch.vue 11:0-364</div>
<div class="a m nw" style="left:5px;top:308.5px;font-size:12.84px;line-height:17px;color:#e6e6e6;-webkit-text-stroke:0.25px;transform:scaleX(0.909);transform-origin:0 50%"> @ ./src/router/index.js</div>
<div class="a m nw" style="left:5px;top:325.5px;font-size:12.84px;line-height:17px;color:#e6e6e6;-webkit-text-stroke:0.25px;transform:scaleX(0.909);transform-origin:0 50%"> @ ./src/main.js</div>
<div class="a m nw" style="left:5px;top:342.5px;font-size:12.84px;line-height:17px;color:#e6e6e6;-webkit-text-stroke:0.25px;transform:scaleX(0.909);transform-origin:0 50%"> @ multi (webpack)-dev-server/client?http://myvue.com:8080 webpack/hot/dev-server</div>
<div class="a m nw" style="left:5px;top:359.5px;font-size:12.84px;line-height:17px;color:#e6e6e6;-webkit-text-stroke:0.25px;transform:scaleX(0.909);transform-origin:0 50%">r ./src/main.js</div>
</div>
<div class="a" style="left:5px;top:439px;width:7px;height:17px;background:#d4d4d4"></div>
</div>
<div class="a" style="left:416px;top:86px;width:304px;height:87px;border:3px solid #e9442d;border-radius:6px"></div>
<div class="a nw" style="left:483px;top:182px;font-size:18.4px;color:#e9442d;line-height:22px">这里外层加个div就好了</div>
</body></html>
